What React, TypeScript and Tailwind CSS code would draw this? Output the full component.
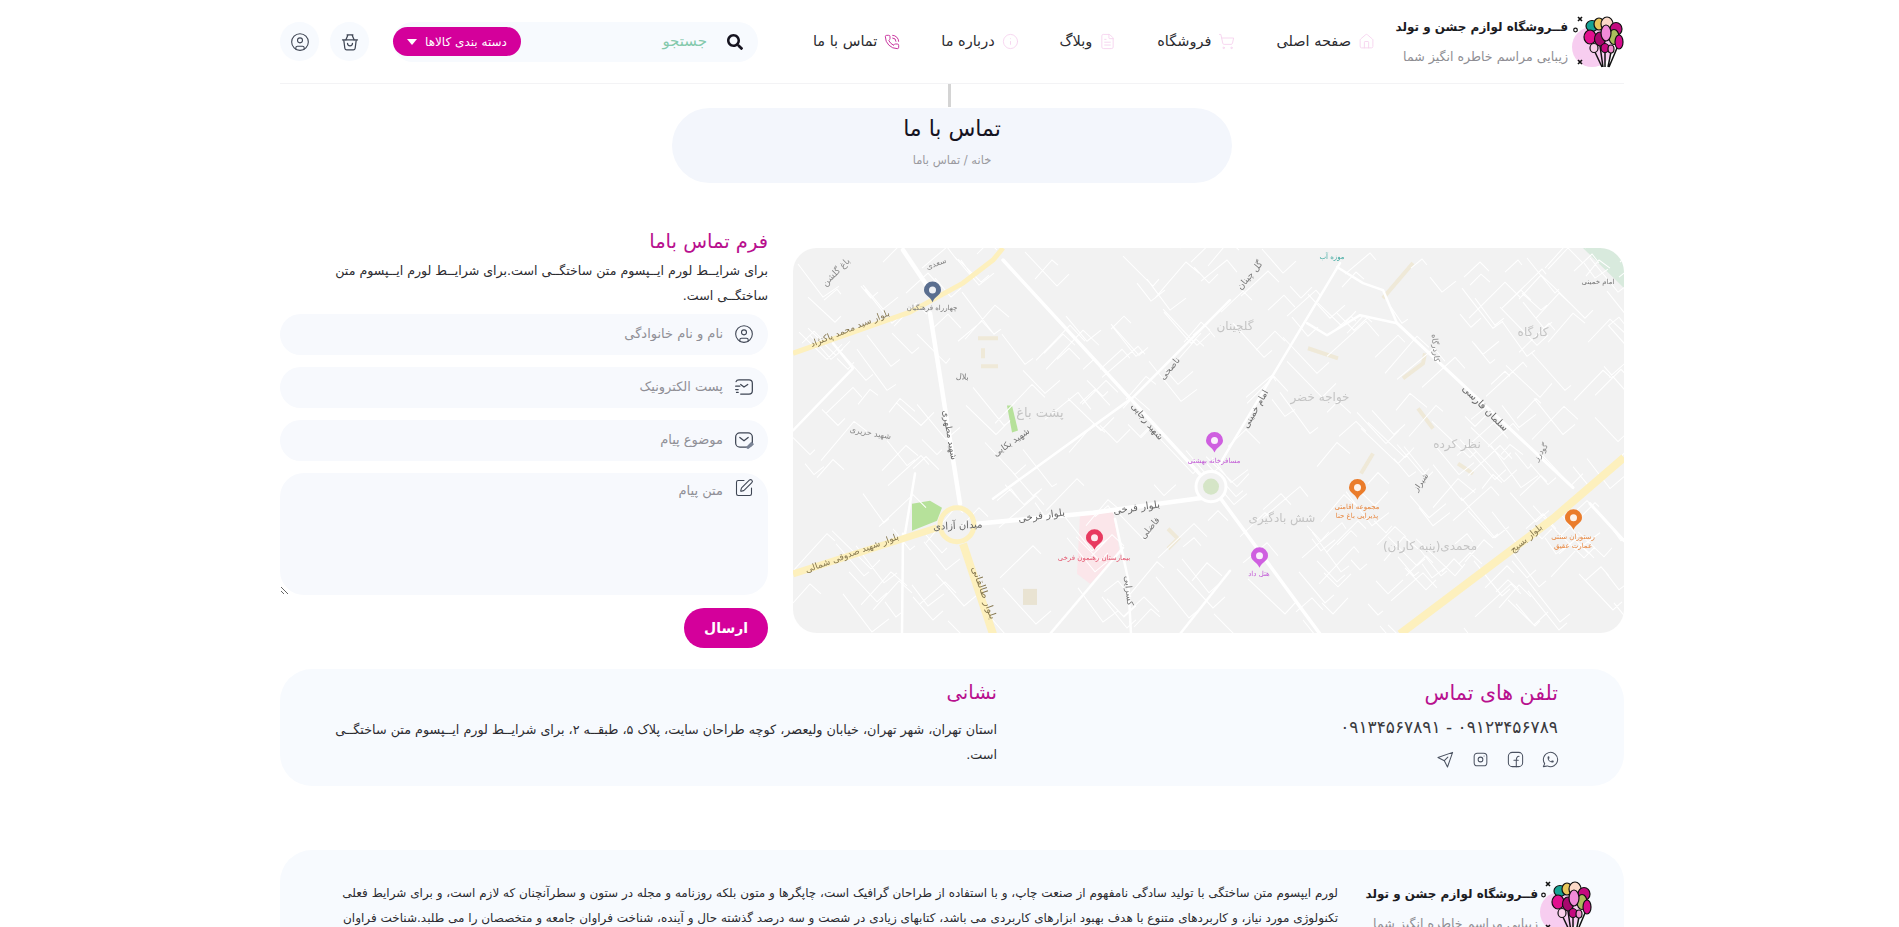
import { CircleUser, Home, ShoppingCart, FileText, Info, PhoneCall, SquarePen } from "lucide-react";
import { FaSearch } from "react-icons/fa";
import { TbBrandInstagram, TbBrandWhatsapp } from "react-icons/tb";

const navItems = [
  { label: "صفحه اصلی", icon: Home },
  { label: "فروشگاه", icon: ShoppingCart },
  { label: "وبلاگ", icon: FileText },
  { label: "درباره ما", icon: Info },
];

// street grid for the map, fixed seed so that every render gives the same one
function buildStreets() {
  let seed = 7;
  const rnd = () => {
    seed = (seed * 16807) % 2147483647;
    return seed / 2147483647;
  };
  const out: string[] = [];
  for (let i = 0; i < 340; i++) {
    const x = rnd() * 831;
    const y = rnd() * 384;
    const len = 14 + rnd() * 40;
    const a = rnd() > 0.5 ? 0.75 + rnd() * 0.2 : -0.68 - rnd() * 0.2;
    const x2 = x + Math.cos(a) * len;
    const y2 = y + Math.sin(a) * len;
    const b = a > 0 ? a - 1.57 : a + 1.57;
    const tail = 6 + rnd() * 16;
    out.push(
      `M${x.toFixed(0)} ${y.toFixed(0)}L${x2.toFixed(0)} ${y2.toFixed(0)}L${(x2 + Math.cos(b) * tail).toFixed(0)} ${(y2 + Math.sin(b) * tail).toFixed(0)}`,
    );
  }
  return out.join("");
}
const streets = buildStreets();

const labels: [number, number, number, string, number, string][] = [
  [58, 83, -22, "بلوار سید محمد پاکنژاد", 9, "#85774f"],
  [139, 62, 0, "چهارراه فرهنگیان", 7, "#777"],
  [144, 18, -20, "سعدی", 8, "#888"],
  [45, 26, -45, "باغ گلشن", 9, "#888"],
  [169, 131, 5, "بلال", 8, "#777"],
  [247, 169, 0, "پشت باغ", 13, "#c4c4c4"],
  [154, 187, 80, "شهید مطهری", 9, "#666"],
  [220, 196, -35, "شهید بکایی", 9, "#777"],
  [77, 187, 10, "شهید حریری", 8, "#888"],
  [165, 280, -3, "میدان آزادی", 10, "#666"],
  [249, 270, -8, "بلوار فرخی", 10, "#666"],
  [344, 262, -8, "بلوار فرخی", 10, "#666"],
  [60, 307, -20, "بلوار شهید صدوقی شمالی", 9, "#85774f"],
  [188, 345, 70, "بلوار طالقانی", 10, "#85774f"],
  [352, 175, 50, "شهید رجایی", 9, "#666"],
  [379, 122, -50, "ناصحی", 9, "#777"],
  [421, 214, 0, "مسافرخانه بهشتی", 7, "#c25ad6"],
  [301, 311, 0, "بیمارستان رهنمون فرخی", 7, "#e4566f"],
  [359, 281, -50, "فاضلی", 9, "#777"],
  [333, 342, 85, "کسرایی", 9, "#777"],
  [465, 162, -60, "امام خمینی", 9, "#666"],
  [459, 29, -50, "گل چینان", 9, "#777"],
  [442, 82, 0, "گلچینان", 12, "#c4c4c4"],
  [527, 153, 0, "خواجه خضر", 12, "#c4c4c4"],
  [664, 199, 0, "نظر کرده", 12, "#c4c4c4"],
  [489, 273, 0, "شش بادگیری", 12, "#c4c4c4"],
  [637, 301, 0, "محمدی(پنبه کاران)", 12, "#c4c4c4"],
  [740, 88, 0, "کارگاه", 12, "#c4c4c4"],
  [690, 162, 45, "سلمان فارسی", 10, "#666"],
  [735, 292, -40, "بلوار بسیج", 9, "#85774f"],
  [564, 260, 0, "مجموعه اقامتی", 7, "#e8873f"],
  [564, 269, 0, "پذیرایی باغ حنا", 7, "#e8873f"],
  [780, 290, 0, "رستوران سنتی", 7, "#e8873f"],
  [780, 299, 0, "عمارت عقیق", 7, "#e8873f"],
  [466, 327, 0, "هتل داد", 7, "#c25ad6"],
  [539, 11, 0, "موزه آب", 7, "#3fa9a0"],
  [805, 36, 0, "امام خمینی", 7, "#777"],
  [640, 100, 85, "کاردرگاه", 8, "#888"],
  [750, 205, -55, "گودرز", 8, "#888"],
  [630, 235, -55, "شیراز", 8, "#777"],
];

const pins: [number, number, string][] = [
  [139, 42, "#5a6e8f"],
  [421, 192, "#cf5fe0"],
  [466, 307, "#cf5fe0"],
  [564, 239, "#ea7c2b"],
  [780, 269, "#ea7c2b"],
  [301, 289, "#e8395f"],
];

function MapPicture() {
  return (
    <svg viewBox="0 0 831 384" className="w-full h-full blur-[0.4px]" preserveAspectRatio="none">
      <rect width="831" height="384" fill="#f2f2f2" />
      <path d="M790 0H831V40Z" fill="#d8eadd" />
      <path d="M287 265L320 262L327 305L297 335L284 325Z" fill="#fbe6ea" />
      <path d="M119 255L137 252L149 259L144 272L119 282Z" fill="#b6e19a" />
      <path d="M214 157L219 157L225 182L219 184Z" fill="#b6e19a" />
      <g fill="none" stroke="#efe9d8" strokeWidth="4">
        <path d="M185 90H205M188 118H205M190 100V110" />
        <path d="M590 50L620 15M610 130L630 115L632 105M625 160L640 180" />
        <path d="M665 215L680 225M568 225L580 205M515 100L545 110" />
        <path d="M375 280L385 290L375 300" />
      </g>
      <rect x="230" y="340" width="14" height="16" fill="#e9e3d2" />
      <path fill="none" stroke="#ffffff" strokeWidth="1" d={streets} />
      <g fill="none" stroke="#ffffff" strokeLinejoin="round" strokeLinecap="round">
        <path strokeWidth="4.500" d="M110 2L139 45M137 65L167 255" />
        <path strokeWidth="3.500" d="M210 12L410 229M427 249L527 385" />
        <path strokeWidth="4.500" d="M184 275L300 264L410 249" />
        <path strokeWidth="2.500" d="M437 52L340 149L200 250M547 15L427 215" />
        <path strokeWidth="3" d="M604 75L780 239M797 255L831 292" />
        <path strokeWidth="2.500" d="M544 19L570 35L590 42L604 75M514 75L534 87L567 67L604 75" />
        <path strokeWidth="2.500" d="M0 182L60 120L40 95M110 285L109 385M112 285L122 225" />
        <path strokeWidth="2.500" d="M330 299L257 385M437 322L387 385M322 270L335 330L338 385" />
      </g>
      <circle cx="418" cy="238" r="15" fill="#f2f2f2" stroke="#ffffff" strokeWidth="3" />
      <circle cx="418" cy="238" r="8" fill="#d5e5c7" />
      <g fill="none" stroke="#fdf0bd" strokeLinejoin="round">
        <path strokeWidth="5" d="M0 105L117 64L170 35L200 12L210 0" />
        <path strokeWidth="7" d="M0 325L144 279" />
        <path strokeWidth="8" d="M170 295L200 385" />
        <path strokeWidth="8" d="M607 385L760 270L831 209" />
        <circle cx="164" cy="276" r="17" strokeWidth="5" />
      </g>
      {pins.map(([x, y, color]) => (
        <g key={x}>
          <path d={`M${x - 8} ${y}a8.5 8.5 0 1 1 17 0c0 5-6 6-8.500 12c-2.500-6-8.500-7-8.500-12Z`} fill={color} />
          <circle cx={x + 0.5} cy={y} r="3.500" fill="#ffffff" fillOpacity="0.9" />
        </g>
      ))}
      {labels.map(([x, y, rot, text, size, color]) => (
        <text
          key={`${x}-${y}`}
          x={x}
          y={y}
          fontSize={size}
          fill={color}
          textAnchor="middle"
          transform={`rotate(${rot} ${x} ${y})`}
        >
          {text}
        </text>
      ))}
    </svg>
  );
}

function BalloonLogo() {
  const balloons: [number, number, number, number, string][] = [
    [20, 10, 6, 5.5, "#16a394"],
    [27, 8, 5, 6, "#e7c65b"],
    [35, 8, 6, 7, "#fbd9c8"],
    [44, 13, 6, 6.500, "#c40a7f"],
    [18, 21, 6, 7, "#e2108f"],
    [28, 23, 5.500, 7, "#a8086e"],
    [42, 21, 5, 7.500, "#a9bd5c"],
    [47, 26, 4, 7, "#d60c8c"],
    [22, 32, 4, 4.500, "#f9d0ea"],
    [33, 32, 4, 4.500, "#c40a7f"],
    [39, 33, 3, 4, "#f08ecf"],
    [34, 17, 5, 8, "#f08ad8"],
  ];
  return (
    <svg viewBox="0 0 52 52" className="w-[52px] h-[52px] shrink-0">
      <circle cx="20" cy="31" r="20" fill="#f7cdf0" />
      <path d="M22 34L30 51M28 30L31 51M33 36L33 51M39 36L36 51M45 32L37 51" stroke="#111" strokeWidth="1.500" fill="none" />
      {balloons.map(([cx, cy, rx, ry, color]) => (
        <ellipse key={`${cx}-${cy}`} cx={cx} cy={cy} rx={rx} ry={ry} fill={color} stroke="#111" strokeWidth="1.200" />
      ))}
      <path d="M6 1L10 5M10 1L6 5M6 44L10 48M10 44L6 48" stroke="#111" strokeWidth="1.600" />
      <circle cx="3.500" cy="14" r="1.800" fill="none" stroke="#111" strokeWidth="1.200" />
    </svg>
  );
}

function BrandText() {
  return (
    <div className="flex flex-col gap-[12px] whitespace-nowrap">
      <span className="text-[12px] leading-[17px] font-bold text-[#1b1b1f]">فــروشگاه لوازم جشن و تولد</span>
      <span className="text-[12.600px] leading-[17px] text-[#8e8e93]">زیبایی مراسم خاطره انگیز شما</span>
    </div>
  );
}

function BasketIcon() {
  return (
    <svg viewBox="0 0 24 24" className="w-[20px] h-[20px]" fill="none" stroke="#3f4654" strokeWidth="1.500" strokeLinecap="round" strokeLinejoin="round">
      <path d="M3 9.500H21M4.500 9.500L5.800 19.500C6 20.600 6.800 21.500 8 21.500H16C17.200 21.500 18 20.600 18.200 19.500L19.500 9.500" />
      <path d="M7 9.500L9.500 3.500M17 9.500L14.500 3.500M8.500 3.500H15.500" />
      <path d="M9 13.500C9 17.500 15 17.500 15 13.500" />
    </svg>
  );
}

function MailLinesIcon() {
  return (
    <svg viewBox="0 0 24 24" className="w-[20px] h-[20px]" fill="none" stroke="#3f4654" strokeWidth="1.500" strokeLinecap="round" strokeLinejoin="round">
      <path d="M2.500 5.500C3 4 4 3.500 6 3.500H18C20.500 3.500 22 5 22 7.500V16.500C22 19 20.500 20.500 18 20.500H8" />
      <path d="M8 9L12 12L16.500 9" />
      <path d="M2 11H7M2 15H5M3 18.500H5" />
    </svg>
  );
}

function MailPenIcon() {
  return (
    <svg viewBox="0 0 24 24" className="w-[20px] h-[20px]" fill="none" stroke="#3f4654" strokeWidth="1.500" strokeLinecap="round" strokeLinejoin="round">
      <rect x="2" y="3.500" width="20" height="17" rx="5" />
      <path d="M7 9L12 13L17 9" />
      <path d="M15 21L21 15L23 17L17 22Z" fill="#7b8496" stroke="#7b8496" />
    </svg>
  );
}

function FacebookSquare() {
  return (
    <svg viewBox="0 0 24 24" className="w-[19px] h-[19px]" fill="none" stroke="#4a5160" strokeWidth="1.300" strokeLinecap="round" strokeLinejoin="round">
      <rect x="3" y="3" width="18" height="18" rx="5" />
      <path d="M13 21V13.500C13 10.500 13.500 8 16.500 8M10 13H15.500" />
    </svg>
  );
}

function PlaneIcon() {
  return (
    <svg viewBox="0 0 24 24" className="w-[19px] h-[19px]" fill="none" stroke="#4a5160" strokeWidth="1.300" strokeLinecap="round" strokeLinejoin="round">
      <path d="M21 3L2.500 9.500L10.500 13.500L14.500 21.500Z" />
      <path d="M10.500 13.500L15 9" />
    </svg>
  );
}

function Field({ placeholder, icon }: { placeholder: string; icon: React.ReactNode }) {
  return (
    <div className="relative h-[41px]">
      <input
        placeholder={placeholder}
        className="w-full h-full rounded-full bg-[#f7f9fd] pr-[45px] pl-4 pb-[2px] text-[13px] outline-none placeholder:text-[#8f8f96]"
      />
      <span className="absolute right-[14px] top-[10px]">{icon}</span>
    </div>
  );
}

export default function App() {
  return (
    <div dir="rtl" className="min-h-screen bg-white text-[#2b2b30] font-['DejaVu_Sans',sans-serif]">
      <div className="pr-[275px] pl-[280px]">
        <header className="flex items-center h-[84px] border-b border-[#f3f3f5]">
          <div className="flex items-center gap-[4px] w-[221px] shrink-0">
            <BalloonLogo />
            <BrandText />
          </div>
          <nav className="flex items-center gap-[41px] text-[14.500px] mr-[28px]">
            {navItems.map((item) => (
              <a key={item.label} className="flex items-center gap-[7px] whitespace-nowrap">
                <item.icon size={17} strokeWidth={1.300} className="text-[#f6d3ef]" />
                {item.label}
              </a>
            ))}
            <a className="flex items-center gap-[7px] whitespace-nowrap">
              <PhoneCall size={16} strokeWidth={1.500} className="text-[#c9359f]" />
              تماس با ما
            </a>
          </nav>
          <div className="flex items-center gap-[11px] mr-auto">
            <div className="flex items-center justify-between h-[40px] w-[365px] ml-[13px] rounded-full bg-[#f7fafe] pr-[15px]">
              <div className="flex items-center gap-[20px]">
                <FaSearch size={16} className="text-[#15131f]" />
                <span className="text-[15px] text-[#84c9ac]">جستجو</span>
              </div>
              <button className="flex items-center gap-[8px] h-[29px] w-[128px] justify-center rounded-full bg-[#d4009b] text-white text-[12px] whitespace-nowrap">
                دسته بندی کالاها
                <span className="w-0 h-0 border-x-[5px] border-x-transparent border-t-[6px] border-t-white" />
              </button>
            </div>
            <div className="flex items-center justify-center w-[39px] h-[39px] rounded-full bg-[#f7fafe]">
              <BasketIcon />
            </div>
            <div className="flex items-center justify-center w-[39px] h-[39px] rounded-full bg-[#f7fafe]">
              <CircleUser size={20} strokeWidth={1.300} className="text-[#3f4654]" />
            </div>
          </div>
        </header>
      </div>

      <div className="flex justify-center">
        <div className="w-[3px] h-[23px] bg-[#d4d4d4]" />
      </div>

      <div className="pr-[275px] pl-[280px]">
        <div className="mx-auto mt-px flex flex-col items-center w-[560px] h-[75px] pt-[7px] rounded-full bg-[#f3f6fc]">
          <h1 className="text-[22px] leading-[28px] font-medium text-[#15131f]">تماس با ما</h1>
          <span className="mt-[10px] text-[11.500px] leading-[14px] text-[#9a9a9f]">خانه / تماس باما</span>
        </div>

        <main className="flex gap-[25px] mt-[47px]">
          <section className="w-[831px] h-[385px] mt-[18px] rounded-[24px] overflow-hidden shrink-0">
            <MapPicture />
          </section>
          <section className="flex-1 flex flex-col">
            <h2 className="text-[19.500px] leading-[24px] text-[#b8108e]">فرم تماس باما</h2>
            <p className="mt-[5px] pl-[12px] text-[12.600px] leading-[24.500px]">
              برای شرایــط لورم ایــپسوم متن ساختگــی است.برای شرایــط لورم ایــپسوم متن ساختگــی است.
            </p>
            <div className="flex flex-col gap-[12px] mt-[6px]">
              <Field placeholder="نام و نام خانوادگی" icon={<CircleUser size={20} strokeWidth={1.300} className="text-[#3f4654]" />} />
              <Field placeholder="پست الکترونیک" icon={<MailLinesIcon />} />
              <Field placeholder="موضوع پیام" icon={<MailPenIcon />} />
              <div className="relative">
                <textarea
                  placeholder="متن پیام"
                  className="block w-full h-[122px] rounded-[24px] bg-[#f7f9fd] pr-[45px] pl-4 pt-[8px] text-[13px] outline-none placeholder:text-[#8f8f96]"
                />
                <span className="absolute right-[14px] top-[5px]">
                  <SquarePen size={20} strokeWidth={1.300} className="text-[#3f4654]" />
                </span>
              </div>
            </div>
            <button className="self-start mt-[13px] w-[84px] h-[40px] rounded-full bg-[#d4009b] text-white text-[14px] font-bold">
              ارسال
            </button>
          </section>
        </main>

        <section className="flex mt-[21px] h-[117px] rounded-[32px] bg-[#f7fafe] pr-[66px] pl-[52px] pt-[11px]">
          <div className="w-[561px] shrink-0">
            <h3 className="text-[20.500px] leading-[26px] text-[#b8108e]">تلفن های تماس</h3>
            <p className="mt-[9px] text-[17px] leading-[24px] text-[#3a3a40]">۰۹۱۲۳۴۵۶۷۸۹ - ۰۹۱۳۴۵۶۷۸۹۱</p>
            <div className="flex items-center gap-[16px] mt-[11px] -mr-[2px] text-[#4a5160]">
              <TbBrandWhatsapp size={19} strokeWidth={1.300} />
              <FacebookSquare />
              <TbBrandInstagram size={19} strokeWidth={1.300} />
              <PlaneIcon />
            </div>
          </div>
          <div className="flex-1">
            <h3 className="text-[19.500px] leading-[26px] text-[#b8108e]">نشانی</h3>
            <p className="mt-[12px] text-[12.750px] leading-[24.500px]">
              استان تهران، شهر تهران، خیابان ولیعصر، کوچه طراحان سایت، پلاک ۵، طبقــه ۲، برای شرایــط لورم ایــپسوم متن ساختگــی است.
            </p>
          </div>
        </section>

        <footer className="flex gap-[20px] mt-[64px] rounded-t-[32px] bg-[#f7fafe] pr-[32px] pl-[52px] pt-[31px] pb-8">
          <div className="flex items-start gap-[2px] shrink-0 w-[234px]">
            <BalloonLogo />
            <div className="mt-[5px]">
              <BrandText />
            </div>
          </div>
          <p className="text-[12px] leading-[25px]">
            لورم ایپسوم متن ساختگی با تولید سادگی نامفهوم از صنعت چاپ، و با استفاده از طراحان گرافیک است، چاپگرها و متون بلکه روزنامه و مجله در ستون و سطرآنچنان که لازم است، و برای شرایط فعلی تکنولوژی مورد نیاز، و کاربردهای متنوع با هدف بهبود ابزارهای کاربردی می باشد، کتابهای زیادی در شصت و سه درصد گذشته حال و آینده، شناخت فراوان جامعه و متخصصان را می طلبد.شناخت فراوان
          </p>
        </footer>
      </div>
    </div>
  );
}
